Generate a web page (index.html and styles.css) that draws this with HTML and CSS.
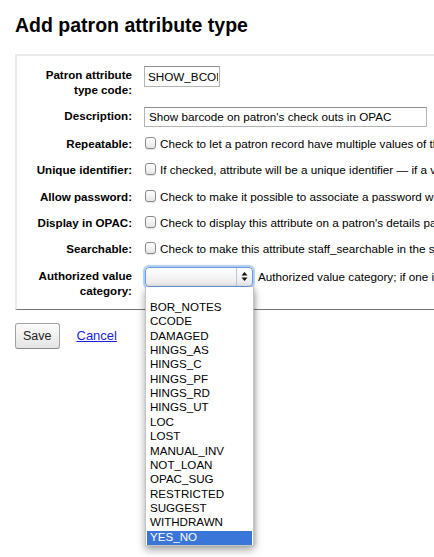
FILE: index.html
```html
<!DOCTYPE html>
<html>
<head>
<meta charset="utf-8">
<link rel="stylesheet" href="styles.css">
</head>
<body>
<h1 class="title">Add patron attribute type</h1>
<fieldset class="rows">
  <div class="row row-first">
    <label class="lbl">Patron attribute type code:</label>
    <div class="field"><input class="inp inp-code" type="text" value="SHOW_BCODE"></div>
  </div>
  <div class="row row-desc">
    <label class="lbl">Description:</label>
    <div class="field"><input class="inp inp-desc" type="text" value="Show barcode on patron's check outs in OPAC"></div>
  </div>
  <div class="row">
    <label class="lbl">Repeatable:</label>
    <div class="field txt"><span class="cb"></span>Check to let a patron record have multiple values of this attribute.</div>
  </div>
  <div class="row">
    <label class="lbl">Unique identifier:</label>
    <div class="field txt"><span class="cb"></span>If checked, attribute will be a unique identifier — if a value is given to a patron record, the same value cannot be given to a different record.</div>
  </div>
  <div class="row">
    <label class="lbl">Allow password:</label>
    <div class="field txt"><span class="cb"></span>Check to make it possible to associate a password with this attribute.</div>
  </div>
  <div class="row">
    <label class="lbl">Display in OPAC:</label>
    <div class="field txt"><span class="cb"></span>Check to display this attribute on a patron's details page in the OPAC.</div>
  </div>
  <div class="row">
    <label class="lbl">Searchable:</label>
    <div class="field txt"><span class="cb"></span>Check to make this attribute staff_searchable in the staff patron search.</div>
  </div>
  <div class="row">
    <label class="lbl">Authorized value category:</label>
    <div class="field field-select">
      <div class="select">
        <span class="select-val"></span>
        <span class="select-arrows">
          <svg width="7" height="11" viewBox="0 0 7 11"><path d="M3.5 1 L6.5 4.5 L0.5 4.5 Z" fill="#111"/><path d="M3.5 10 L6.5 6.5 L0.5 6.5 Z" fill="#111"/></svg>
        </span>
        <ul class="popup">
          <li>&nbsp;</li>
          <li>BOR_NOTES</li>
          <li>CCODE</li>
          <li>DAMAGED</li>
          <li>HINGS_AS</li>
          <li>HINGS_C</li>
          <li>HINGS_PF</li>
          <li>HINGS_RD</li>
          <li>HINGS_UT</li>
          <li>LOC</li>
          <li>LOST</li>
          <li>MANUAL_INV</li>
          <li>NOT_LOAN</li>
          <li>OPAC_SUG</li>
          <li>RESTRICTED</li>
          <li>SUGGEST</li>
          <li>WITHDRAWN</li>
          <li class="sel">YES_NO</li>
        </ul>
      </div>
      <span class="txt select-hint">Authorized value category; if one is selected, the patron record input page will only allow values to be chosen from the authorized value list.</span>
    </div>
  </div>
</fieldset>
<div class="actions">
  <button class="btn" type="button">Save</button>
  <a class="cancel" href="#">Cancel</a>
</div>
</body>
</html>
```
FILE: styles.css
```css
html {
  overflow: hidden;
  height: 100%;
}
body {
  margin: 0;
  padding: 0 0 0 15px;
  min-height: 100%;
  box-sizing: border-box;
  font-family: "Liberation Sans", Arial, sans-serif;
  color: #000;
  background: #fff;
}
.title {
  font-size: 19.5px;
  font-weight: bold;
  line-height: normal;
  margin: 14.4px 0 16.2px;
}
.rows {
  margin: 0;
  padding: 10px 0 11px;
  width: 700px;
  min-width: 0;
  box-sizing: border-box;
  border: 2px solid #ebebeb;
  border-right: 0;
  border-bottom: 1px solid #757575;
}
.row {
  display: flex;
  align-items: flex-start;
  white-space: nowrap;
  margin-bottom: 10.3px;
}
.row:last-child {
  margin-bottom: 0;
}
.row-first {
  margin-bottom: 10px;
}
.row-desc {
  margin-bottom: 8.5px;
}
.lbl {
  width: 100px;
  margin-left: 15px;
  flex: none;
  text-align: right;
  font-weight: bold;
  font-size: 11.6px;
  line-height: 15px;
  padding-top: 1px;
  white-space: normal;
}
.field {
  margin-left: 12px;
}
.txt {
  font-size: 11.7px;
  line-height: 15px;
  padding-top: 1px;
}
.inp {
  display: block;
  box-sizing: border-box;
  margin: 0;
  font-family: "Liberation Sans", Arial, sans-serif;
  font-size: 11.7px;
  color: #000;
  background: #fff;
  border: 1px solid #b4b4b4;
  border-top-color: #8e8e8e;
  border-radius: 0;
  outline: none;
}
.inp-code {
  width: 76px;
  height: 21px;
  padding: 0 1px 0 3px;
}
.inp-desc {
  width: 283px;
  height: 20px;
  padding: 0 3px 0 4px;
}
.cb {
  display: inline-block;
  width: 11px;
  height: 12px;
  margin: 0 4px 0 1px;
  vertical-align: -1px;
  box-sizing: border-box;
  border: 1px solid #8a8a8a;
  border-radius: 3px;
  background: linear-gradient(#ffffff, #e6e6e6);
  box-shadow: 0 1px 1px rgba(0,0,0,0.12);
}
.field-select {
  display: flex;
  align-items: center;
}
.select {
  position: relative;
  width: 108px;
  height: 20px;
  margin-left: 1px;
  box-sizing: border-box;
  border: 1px solid #6a9bdc;
  border-radius: 4px;
  background: linear-gradient(#ffffff, #e8e8e8);
  box-shadow: 0 0 1px 2px rgba(125, 170, 235, 0.6);
  display: flex;
}
.select-val {
  flex: 1;
}
.select-arrows {
  width: 15px;
  border-left: 1px solid #b9c7dc;
  display: flex;
  align-items: center;
  justify-content: center;
}
.select-arrows svg {
  display: block;
}
.select-hint {
  margin-left: 5px;
  padding-top: 0;
}
.popup {
  position: absolute;
  top: 19px;
  left: -1px;
  width: 109px;
  box-sizing: border-box;
  margin: 0;
  padding: 0 1px;
  list-style: none;
  background: #fff;
  border: 1px solid #c4c4c4;
  border-top: 0;
  box-shadow: 0 4px 8px rgba(0, 0, 0, 0.35), 2px 0 4px rgba(0,0,0,0.12);
  z-index: 5;
}
.popup li {
  font-size: 11.6px;
  line-height: 11.36px;
  height: 14.36px;
  box-sizing: border-box;
  padding: 0 0 3px 3px;
  color: #000;
}
.popup li.sel {
  background: #3a76d7;
  color: #fff;
}
.actions {
  display: flex;
  align-items: baseline;
  margin-top: 13px;
}
.btn {
  height: 26px;
  padding: 0 7px;
  margin: 0;
  font-family: "Liberation Sans", Arial, sans-serif;
  font-size: 12.5px;
  color: #222;
  border: 1px solid #a3a3a3;
  border-bottom-color: #8a8a8a;
  border-radius: 3px;
  background: linear-gradient(#fbfbfb, #e4e4e4);
}
.cancel {
  margin-left: 17px;
  font-size: 13px;
  color: #1c1ce0;
  text-decoration: underline;
}
```
